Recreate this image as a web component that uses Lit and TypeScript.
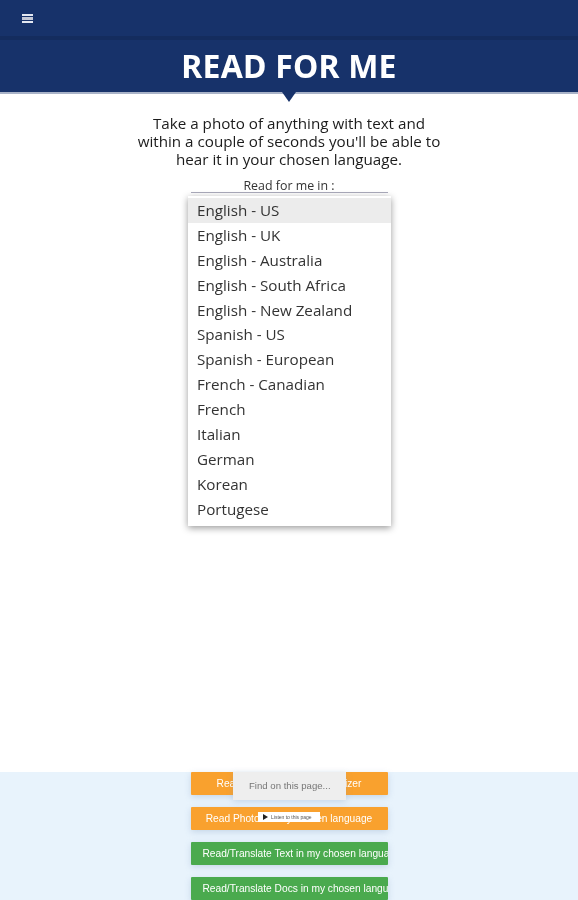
import { LitElement, html, css } from "lit";
import { customElement } from "lit/decorators.js";

const LANGS = ["English - US","English - UK","English - Australia","English - South Africa","English - New Zealand","Spanish - US","Spanish - European","French - Canadian","French","Italian","German","Korean","Portugese"];

@customElement("app-root")
export class AppRoot extends LitElement {
  static styles = css`
    :host { display: block; height: 900px; overflow: hidden; position: relative; font-family: "Open Sans", "Noto Sans", sans-serif; color: #222; background: #fff; }
    .page { height: 900px; display: flex; flex-direction: column; filter: blur(0.5px); }
    .bar { height: 36px; flex: none; background: #17326a; display: flex; align-items: center; padding: 0 0 0 22px; border-bottom: 4px solid #142c5e; }
    .burger { width: 11px; height: 9px; display: flex; flex-direction: column; gap: 1px; margin-top: 1px; }
    .burger i { display: block; height: 2px; background: #e4e8f2; }
    .burger i:nth-child(2) { height: 3px; background: #c4c8d6; }
    .banner { height: 52px; flex: none; background: #17326a; border-bottom: 2px solid #a9b3c8; display: flex; align-items: center; justify-content: center; position: relative; }
    h1 { margin: 0; font-size: 32px; line-height: 52px; font-weight: 700; color: #fff; font-family: "Noto Sans", sans-serif; letter-spacing: 0.2px; }
    .tip { position: absolute; left: 282px; top: 52px; width: 0; height: 0; border-left: 7px solid transparent; border-right: 7px solid transparent; border-top: 10px solid #17326a; }
    .main { flex: 1; display: flex; flex-direction: column; align-items: center; padding-top: 20px; }
    p { margin: 0; font-size: 15.2px; line-height: 18px; text-align: center; width: 315px; color: #1c1c1c; }
    .label { font-size: 12.4px; line-height: 13px; margin-top: 11px; color: #333; }
    .select { width: 197px; height: 1px; background: #aab; }
    .foot { height: 128px; flex: none; background: #e8f3fc; display: flex; flex-direction: column; align-items: center; gap: 12px; }
    .btn { width: 197px; height: 23px; flex: none; box-shadow: 0 2px 6px rgba(120,150,190,.3); color: #fff; font: 10.2px/23px "Liberation Sans", sans-serif; white-space: nowrap; overflow: hidden; border-radius: 1px; filter: blur(0.3px); }
    .orange { background: #f9a12e; text-align: center; }
    .green { background: #4aaa4e; padding-left: 12px; box-sizing: border-box; }
    .menu { position: absolute; left: 188px; top: 196px; width: 203px; height: 330px; background: #fff; box-shadow: 0 2px 7px rgba(0,0,0,.4); padding-top: 2px; box-sizing: border-box; filter: blur(0.45px); }
    .item { height: 24.9px; line-height: 25px; font-size: 15.2px; padding-left: 9px; color: #333; }
    .item.sel { background: #ececec; }
    .find { position: absolute; left: 233px; top: 772px; width: 113px; height: 28px; background: #eeeeee; color: #777; font: 9.6px/28px "Liberation Sans", sans-serif; padding-left: 16px; box-sizing: border-box; filter: blur(0.5px); box-shadow: 0 2px 6px rgba(120,150,190,.25); }
    .listen { position: absolute; left: 258px; top: 812px; width: 62px; height: 10px; background: #fff; color: #555; font: 5px/10px "Liberation Sans", sans-serif; display: flex; align-items: center; gap: 3px; padding-left: 5px; box-sizing: border-box; filter: blur(0.3px); }
    .listen svg { width: 5px; height: 6px; flex: none; }
  `;

  render() {
    return html`
      <div class="page">
        <div class="bar"><div class="burger"><i></i><i></i><i></i></div></div>
        <div class="banner"><h1>READ FOR ME</h1><div class="tip"></div></div>
        <div class="main">
          <p>Take a photo of anything with text and within a couple of seconds you'll be able to hear it in your chosen language.</p>
          <div class="label">Read for me in :</div>
          <div class="select"></div>
        </div>
        <div class="foot">
          <div class="btn orange">Read Photo - Visual Recognizer</div>
          <div class="btn orange">Read Photos in my chosen language</div>
          <div class="btn green">Read/Translate Text in my chosen language</div>
          <div class="btn green">Read/Translate Docs in my chosen language</div>
        </div>
      </div>
      <div class="menu">
        ${LANGS.map((l, i) => html`<div class="item ${i === 0 ? "sel" : ""}">${l}</div>`)}
      </div>
      <div class="find">Find on this page...</div>
      <div class="listen"><svg viewBox="0 0 5 6"><path d="M0 0l5 3-5 3z" fill="#222"/></svg>Listen to this page</div>
    `;
  }
}
